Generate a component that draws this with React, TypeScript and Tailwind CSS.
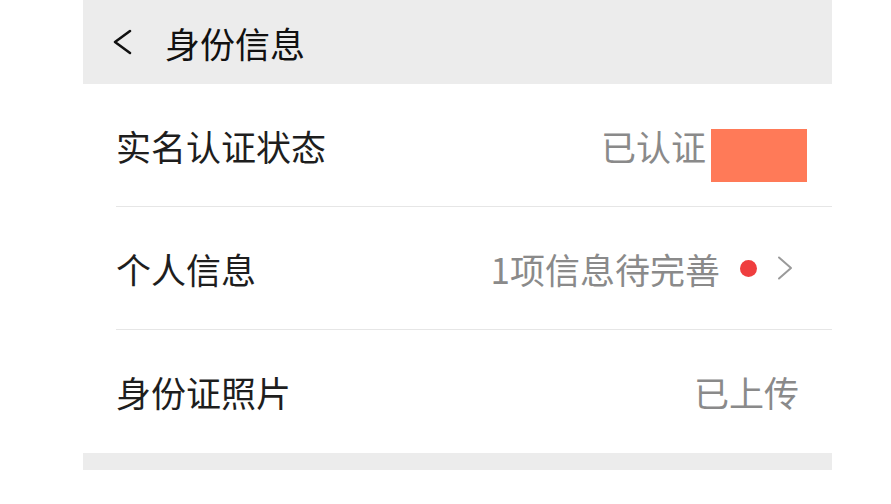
import React from "react";

const font = { fontFamily: '"Noto Sans CJK SC", "Noto Sans", sans-serif' };

function Chevron({ className }: { className?: string }) {
  return (
    <svg className={className} viewBox="0 0 16 24" fill="none">
      <path d="M2 1.5 L14 12 L2 22.5" stroke="currentColor" strokeWidth="2" strokeLinecap="round" strokeLinejoin="round" />
    </svg>
  );
}

export default function App() {
  return (
    <div className="w-[891px] h-[504px] bg-white overflow-hidden" style={font}>
      <div className="ml-[83px] w-[749px] flex flex-col">
        <div className="h-[84px] bg-[#ececec] flex items-center pl-[29px]">
          <svg className="w-[20px] h-[26px] text-[#111]" viewBox="0 0 20 26" fill="none">
            <path d="M18 2 L3 13 L18 24" stroke="currentColor" strokeWidth="2.6" strokeLinecap="round" strokeLinejoin="round" />
          </svg>
          <span className="ml-[33px] text-[35px] leading-none text-[#111]">身份信息</span>
        </div>

        <div className="ml-[33px] h-[123px] border-b border-[#e6e6e6] pr-[25px] flex items-center justify-between">
          <span className="text-[35px] leading-none text-[#1e1e1e]">实名认证状态</span>
          <div className="flex items-center">
            <span className="text-[35px] leading-none text-[#8a8a8a]">已认证</span>
            <div className="ml-[5px] mt-[20px] w-[96px] h-[53px] bg-[#ff7a58]"></div>
          </div>
        </div>

        <div className="ml-[33px] h-[123px] border-b border-[#e6e6e6] pr-[39px] flex items-center justify-between">
          <span className="text-[35px] leading-none text-[#1e1e1e]">个人信息</span>
          <div className="flex items-center">
            <span className="text-[35px] leading-none text-[#8a8a8a]">1项信息待完善</span>
            <div className="ml-[20px] w-[17px] h-[17px] rounded-full bg-[#ef3e3f]"></div>
            <Chevron className="ml-[20px] w-[16px] h-[24px] text-[#9a9a9a]" />
          </div>
        </div>

        <div className="ml-[33px] h-[123px] pr-[33px] flex items-center justify-between">
          <span className="text-[35px] leading-none text-[#1e1e1e]">身份证照片</span>
          <span className="text-[35px] leading-none text-[#8a8a8a]">已上传</span>
        </div>

        <div className="h-[17px] bg-[#ececec]"></div>
      </div>
    </div>
  );
}
